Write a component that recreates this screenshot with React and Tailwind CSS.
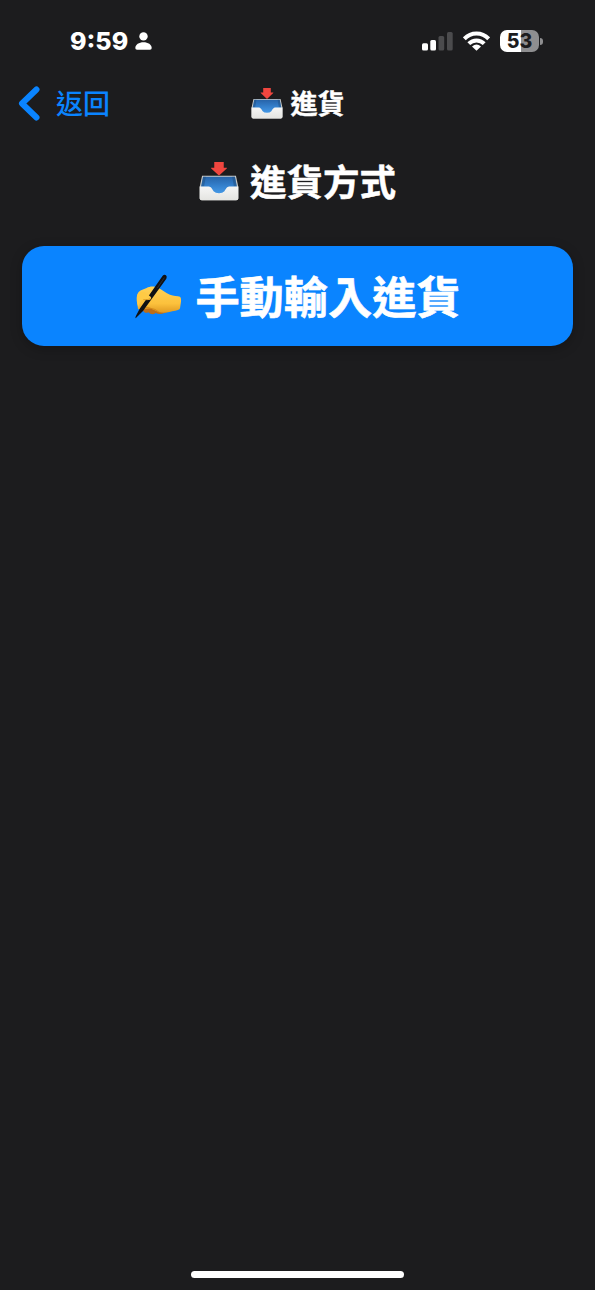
import React from 'react';

const font = 'font-["Inter","Noto_Sans_CJK_TC",sans-serif]';

function TrayIcon({ id, className }) {
  return (
    <svg viewBox="0 0 118 116" preserveAspectRatio="none" className={className}>
      <defs>
        <linearGradient id={`${id}-in`} x1="0" y1="0" x2="0" y2="1">
          <stop offset="0" stopColor="#2763a8" />
          <stop offset="0.45" stopColor="#347fcb" />
          <stop offset="1" stopColor="#4aa0ee" />
        </linearGradient>
        <linearGradient id={`${id}-front`} x1="0" y1="0" x2="0" y2="1">
          <stop offset="0" stopColor="#f6f6f5" />
          <stop offset="1" stopColor="#e4e4e1" />
        </linearGradient>
      </defs>
      <path d="M9 41H109L116 74V108Q116 114 110 114H8Q2 114 2 108V74Z" fill="#c9cbc9" />
      <path d="M12 44H106L112 76V100H6V76Z" fill={`url(#${id}-in)`} />
      <path d="M12 44H20L15 73H6Z" fill="#1f4d7e" opacity="0.5" />
      <path d="M106 44H98L103 73H112Z" fill="#1f4d7e" opacity="0.5" />
      <path
        d="M2 73H26C37 73 38 80 43 87Q48 93 59 93T75 87C80 80 81 73 92 73H116V108Q116 114 110 114H8Q2 114 2 108Z"
        fill={`url(#${id}-front)`}
      />
      <path d="M45 0H73V17H82Q83 18 82 19L61 39Q59 41 57 39L36 19Q35 18 36 17H45Z" fill="#f0463f" />
    </svg>
  );
}

function WritingHandIcon({ className }) {
  return (
    <svg viewBox="0 0 144 135" className={className}>
      <defs>
        <linearGradient id="skin" x1="0" y1="0" x2="0" y2="1">
          <stop offset="0" stopColor="#ffd257" />
          <stop offset="0.65" stopColor="#fcc13c" />
          <stop offset="1" stopColor="#e09a22" />
        </linearGradient>
      </defs>
      <path d="M24 104Q32 121 43 115Q54 126 65 117Q77 123 92 117L112 110L80 88L38 91Z" fill="#bd6d17" />
      <path
        d="M10 91C7 78 7 65 12 57C17 48 28 47 38 42C48 36 62 36 74 42C86 48 95 58 108 62C118 66 131 65 138 68Q142 71 141 83L138 103Q136 109 124 110C107 112 94 120 73 114L49 103L27 105Q20 109 12 105Z"
        fill="url(#skin)"
      />
      <path d="M50 103Q40 96 28 105M76 115Q64 104 50 103" stroke="#d58a19" strokeWidth="3" fill="none" />
      <path d="M86 5Q91 0 96 4Q100 8 97 14L27 111L5 133Q3 130 6 125L17 104Z" fill="#101114" />
      <path d="M91 11L70 42" stroke="#3b3d41" strokeWidth="2" />
      {/* index finger curled over the barrel */}
      <path d="M11 60Q24 49 35 56Q43 63 50 68Q55 75 45 78L28 76Q16 83 13 100Q8 89 9 74Z" fill="#ffca45" />
      <path d="M28 77Q42 79 50 73" stroke="#dc971f" strokeWidth="2.5" fill="none" />
    </svg>
  );
}

function StatusBar() {
  return (
    <div className="flex h-[80px] items-start justify-between pl-[70px] pr-[52px] pt-[28px]">
      <div className="flex h-[26px] items-center">
        <span className="w-[59px] origin-left scale-x-102 whitespace-nowrap text-[24.5px] font-extrabold leading-[26px]">9:59</span>
        <svg viewBox="0 0 17 18" className="ml-[6px] h-[18px] w-[17px]" fill="white">
          <circle cx="8.5" cy="4.4" r="4.2" />
          <path d="M0.3 16C0.3 12.6 4 10.2 8.5 10.2S16.7 12.6 16.7 16Q16.7 17.7 15 17.7H2Q0.3 17.7 0.3 16Z" />
        </svg>
      </div>
      <div className="flex h-[26px] items-center">
        <svg viewBox="0 0 31 20" className="mr-[10px] h-[20px] w-[31px]" fill="white">
          <rect x="0" y="12.2" width="6" height="7.3" rx="1.5" />
          <rect x="8.3" y="9" width="5.7" height="10.5" rx="1.5" />
          <rect x="16.5" y="5" width="5.7" height="14.5" rx="1.5" fill="#4b4b4d" />
          <rect x="25" y="1" width="5.7" height="18.5" rx="1.5" fill="#4b4b4d" />
        </svg>
        <svg viewBox="0 0 27 20" className="mr-[10px] h-[20px] w-[27px]" fill="none" stroke="white" strokeWidth="4">
          <path d="M1.3 7.8C8 0.7 19 0.7 25.7 7.8" />
          <path d="M5.8 12.6C10.1 8.3 16.9 8.3 21.2 12.6" />
          <path d="M13.5 19.8L9 15.4Q13.5 11.7 18 15.4Z" fill="white" stroke="none" />
        </svg>
        <div className="flex h-[22px] w-[39px] items-center justify-center rounded-[7px] bg-linear-to-r from-white from-53% to-[#8e8e90] to-53%">
          <span className="text-[19.5px] font-extrabold leading-[22px] text-[#1c1c1e]">53</span>
        </div>
        <div className="ml-[1px] h-[7px] w-[3px] rounded-r-full bg-[#8e8e90]" />
      </div>
    </div>
  );
}

export default function App() {
  return (
    <div className={`flex h-[1290px] w-[595px] flex-col overflow-hidden bg-[#1c1c1e] text-white ${font}`}>
      <StatusBar />

      <header className="grid h-[48px] grid-cols-[1fr_auto_1fr] items-center">
        <button className="flex items-center pl-[18px] text-[#0a84ff]">
          <svg viewBox="0 0 22 36" className="h-[36px] w-[22px]" fill="none" stroke="currentColor" strokeWidth="6" strokeLinecap="round" strokeLinejoin="round">
            <path d="M18.5 3.5L4 17.5L18.5 31.5" />
          </svg>
          <span className="ml-[16px] pt-[2px] text-[27px] font-medium leading-[46px]">返回</span>
        </button>
        <div className="flex items-center">
          <TrayIcon id="nav" className="mb-[2px] h-[31px] w-[32px]" />
          <span className="ml-[8px] pt-[2px] text-[27px] font-bold leading-[46px] [-webkit-text-stroke:0.4px_white]">進貨</span>
        </div>
      </header>

      <main className="flex flex-1 flex-col px-[22px] pt-[26px]">
        <h1 className="flex h-[56px] items-center justify-center">
          <TrayIcon id="heading" className="mb-[2px] h-[39px] w-[40px]" />
          <span className="ml-[11px] pt-[2px] text-[36.5px] font-bold leading-[54px] [-webkit-text-stroke:0.5px_white]">進貨方式</span>
        </h1>
        <button className="mt-[36px] flex h-[100px] items-center justify-center rounded-[22px] bg-[#0a84ff] shadow-[0_3px_12px_rgba(0,0,0,0.25)]">
          <WritingHandIcon className="h-[45px] w-[48px]" />
          <span className="ml-[13px] pt-[4px] text-[44.2px] font-bold leading-[60px] [-webkit-text-stroke:0.6px_white]">手動輸入進貨</span>
        </button>
      </main>

      <div className="mx-auto mb-[12px] h-[7px] w-[213px] shrink-0 rounded-full bg-white" />
    </div>
  );
}
